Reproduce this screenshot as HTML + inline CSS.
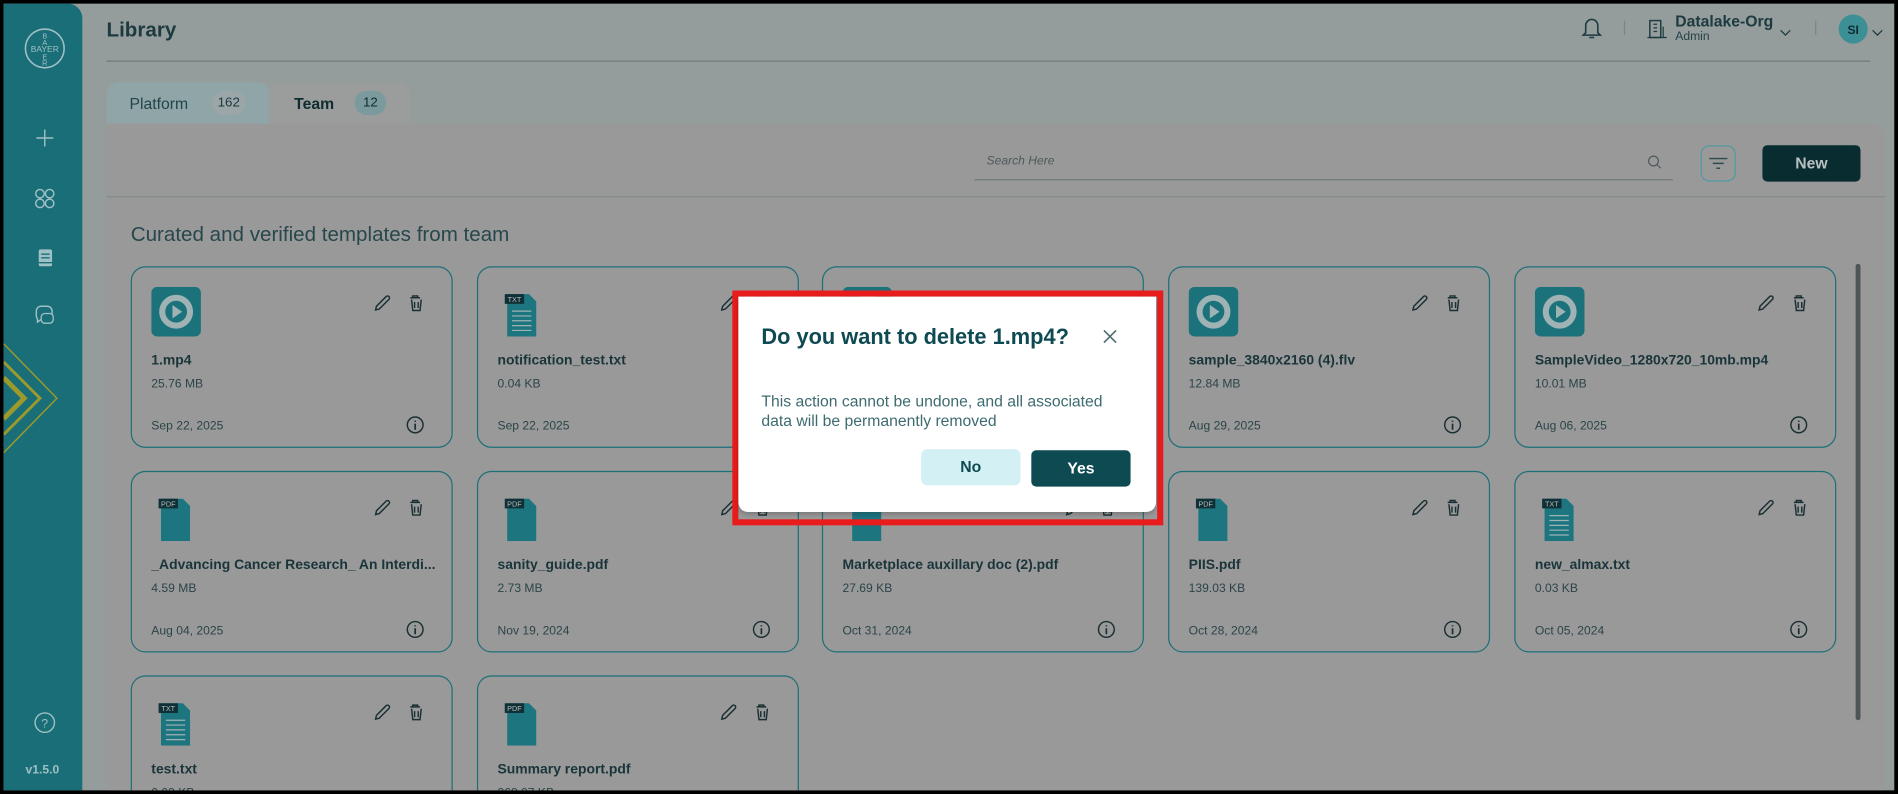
<!DOCTYPE html>
<html><head><meta charset="utf-8"><style>
*{box-sizing:border-box;margin:0;padding:0}
html,body{width:1898px;height:794px;overflow:hidden;background:#000}
#s{position:absolute;left:0;top:0;width:1568px;height:656px;transform:scale(1.21046);transform-origin:0 0;font-family:"Liberation Sans",sans-serif;background:#000;overflow:hidden}
.a{position:absolute}
#main{left:3px;top:3px;width:1562px;height:650px;background:#949c9c;overflow:hidden}
#side{left:3px;top:3px;width:65px;height:650px;background:#1a6e78;border-radius:0 12px 0 0}
.card{position:absolute;width:266px;height:150px;border:1px solid #1d6f78;border-radius:12px;overflow:hidden}
.card .nm{position:absolute;left:16px;top:71px;font-size:11.5px;font-weight:bold;color:#1a353a;white-space:nowrap}
.card .sz{position:absolute;left:16px;top:91px;font-size:10px;color:#2b4448}
.card .dt{position:absolute;left:16px;top:126px;font-size:10px;color:#2b4448}
.card .ic{position:absolute;left:16px;top:16px}
.card .ed{position:absolute;left:192px;top:16px}
.card .inf{position:absolute;left:226px;top:122px}
</style></head><body><div id="s">
<div id="main" class="a"></div>
<div id="side" class="a">
<svg class="a" style="left:0;top:0" width="65" height="650">
<circle cx="34" cy="37" r="16" fill="none" stroke="#9fc0c4" stroke-width="1.3"/>
<text x="34" y="40" font-size="7" fill="#9fc0c4" text-anchor="middle" font-family="Liberation Sans">BAYER</text>
<text x="34" y="29" font-size="6" fill="#9fc0c4" text-anchor="middle">B</text>
<text x="34" y="34" font-size="6" fill="#9fc0c4" text-anchor="middle">A</text>
<text x="34" y="46" font-size="6" fill="#9fc0c4" text-anchor="middle">E</text>
<text x="34" y="51" font-size="6" fill="#9fc0c4" text-anchor="middle">R</text>
<path d="M34 104v14M27 111h14" stroke="#9fc0c4" stroke-width="1.2"/>
<g fill="none" stroke="#9fc0c4" stroke-width="1.2"><circle cx="30" cy="157" r="3.5"/><circle cx="38" cy="157" r="3.5"/><circle cx="30" cy="165" r="3.5"/><circle cx="38" cy="165" r="3.5"/></g>
<rect x="29" y="203" width="11" height="14" rx="1.5" fill="#9fc0c4"/><path d="M31 207h7M31 210h7M29 214h11" stroke="#1a6e78" stroke-width="1.2"/>
<path d="M27 254a4 4 0 0 1 4-4h5a4 4 0 0 1 4 4v3a4 4 0 0 1-4 4h-5l-3 2v-2.5a4 4 0 0 1-1-2.5z" fill="none" stroke="#9fc0c4" stroke-width="1.2"/>
<rect x="31" y="256" width="10" height="8" rx="3" fill="#1a6e78" stroke="#9fc0c4" stroke-width="1.1"/>
<g fill="none" stroke="#9b9a2a"><path d="M0 281L44 326L0 371" stroke-width="1.2"/><path d="M0 296L30 326L0 356" stroke-width="2.4"/><path d="M0 309L17 326L0 343" stroke-width="4"/></g>
<circle cx="34" cy="594" r="8" fill="none" stroke="#9fc0c4" stroke-width="1.2"/><text x="34" y="598" font-size="10" fill="#9fc0c4" text-anchor="middle">?</text>
<text x="32" y="636" font-size="10" font-weight="bold" fill="#9fc0c4" text-anchor="middle">v1.5.0</text>
</svg></div>
<div class="a" style="left:88px;top:15px;font-size:17px;font-weight:bold;color:#1c3a3f">Library</div>
<div class="a" style="left:88px;top:50px;width:1457px;height:1px;background:#6f7a7b"></div>
<svg class="a" style="left:1300px;top:8px" width="268" height="34">
<path d="M15 8a5 5 0 0 1 5 5v6l2 2H8l2-2v-6a5 5 0 0 1 5-5zM13 23h4" fill="none" stroke="#1c3a3f" stroke-width="1.3"/>
<path d="M42 9v12M200 9v12" stroke="#7c8586" stroke-width="1"/>
<rect x="63" y="9" width="9" height="14" fill="none" stroke="#1c3a3f" stroke-width="1.2"/><path d="M66 12h3M66 15h3M66 18h3M74 14v9M61 23h16" stroke="#1c3a3f"/>
<path d="M171 17l4 4 4-4M247 17l4 4 4-4" fill="none" stroke="#1c3a3f" stroke-width="1"/>
<circle cx="231" cy="16" r="12" fill="#3d8f96"/><text x="231" y="20" font-size="10" font-weight="bold" fill="#0f2b2f" text-anchor="middle">SI</text>
</svg>
<div class="a" style="left:1384px;top:10px;font-size:13px;font-weight:bold;color:#1c3a3f">Datalake-Org</div>
<div class="a" style="left:1384px;top:25px;font-size:10px;color:#24434a">Admin</div>
<div class="a" style="left:88px;top:68px;width:135px;height:36px;background:#8fa5a8;border-radius:10px 10px 0 0"></div>
<div class="a" style="left:222px;top:68px;width:117px;height:36px;background:#9b9c9c;border-radius:10px 10px 0 0"></div>
<div class="a" style="left:107px;top:78px;font-size:13px;color:#24434a">Platform</div>
<div class="a" style="left:175px;top:75px;width:28px;height:20px;border-radius:10px;background:#9aa6a7;font-size:11px;line-height:20px;text-align:center;color:#1c3a3f">162</div>
<div class="a" style="left:243px;top:78px;font-size:13px;font-weight:bold;color:#102c30">Team</div>
<div class="a" style="left:293px;top:75px;width:26px;height:20px;border-radius:10px;background:#7a9a9d;font-size:11px;line-height:20px;text-align:center;color:#102c30">12</div>
<div class="a" style="left:88px;top:102px;width:1469px;height:551px;background:#999;border-radius:0 12px 0 0"></div>
<div class="a" style="left:815px;top:128px;font-size:10px;font-style:italic;color:#4d5a5c">Search Here</div>
<div class="a" style="left:805px;top:148px;width:577px;height:1px;background:#717b7c"></div>
<svg class="a" style="left:1360px;top:127px" width="14" height="14"><circle cx="6" cy="6" r="4" fill="none" stroke="#4d5a5c"/><path d="M9 9l3 3" stroke="#4d5a5c"/></svg>
<div class="a" style="left:1405px;top:120px;width:29px;height:30px;border:1px solid #4f9aa2;border-radius:7px"></div>
<svg class="a" style="left:1405px;top:120px" width="29" height="30"><path d="M7 11h15M10 15h9M13 19h3" stroke="#2d4a4e" stroke-width="1.2"/></svg>
<div class="a" style="left:1456px;top:120px;width:81px;height:30px;background:#092c31;border-radius:4px;color:#b9c0c0;font-size:13px;font-weight:bold;text-align:center;line-height:30px">New</div>
<div class="a" style="left:88px;top:162px;width:1469px;height:1px;background:#828b8c"></div>
<div class="a" style="left:108px;top:184px;font-size:17px;color:#27474c">Curated and verified templates from team</div>
<div class="a" style="left:1533px;top:218px;width:4px;height:377px;background:#4e5556;border-radius:2px"></div>

<svg width="0" height="0" style="position:absolute"><defs>
<g id="vid"><rect width="41" height="41" rx="5" fill="#1b727b"/><circle cx="20.5" cy="20.5" r="14" fill="#9fb3b5"/><circle cx="20.5" cy="20.5" r="9" fill="#1b727b"/><path d="M17.5 15v11l8-5.5z" fill="#9fb3b5"/></g>
<g id="edit"><path d="M10 16l8-8a1.6 1.6 0 0 1 2.3 2.3l-8 8-3 .8z" fill="none" stroke="#1a2f33" stroke-width="1.2"/><path d="M38 9h8M40 9v-1.5h4V9M39 10.5l1 9h6l1-9M41.5 12.5v5M44.5 12.5v5" fill="none" stroke="#1a2f33" stroke-width="1.2"/></g>
<g id="info"><circle cx="8" cy="8" r="6.5" fill="none" stroke="#1a2f33" stroke-width="1.2"/><path d="M8 7v5M8 4.5v1" stroke="#1a2f33" stroke-width="1.4"/></g>
</defs></svg>

<div class="card" style="left:108px;top:220px"><svg class="ic" width="41" height="41"><use href="#vid"/></svg><svg class="ed" width="52" height="24"><use href="#edit"/></svg><div class="nm">1.mp4</div><div class="sz">25.76 MB</div><div class="dt">Sep 22, 2025</div><svg class="inf" width="16" height="16"><use href="#info"/></svg></div>
<div class="card" style="left:394px;top:220px"><svg class="ic" width="41" height="41"><path d="M8 6h18l6 6v29H8z" fill="#1d7580"/><rect x="6" y="6" width="16" height="8" fill="#0e3036"/><text x="14" y="12.5" font-size="6" fill="#bbb" text-anchor="middle">TXT</text><path d="M12 20h16M12 24h16M12 28h16M12 32h16M12 36h16" stroke="#9fb3b5"/></svg><svg class="ed" width="52" height="24"><use href="#edit"/></svg><div class="nm">notification_test.txt</div><div class="sz">0.04 KB</div><div class="dt">Sep 22, 2025</div><svg class="inf" width="16" height="16"><use href="#info"/></svg></div>
<div class="card" style="left:679px;top:220px"><svg class="ic" width="41" height="41"><use href="#vid"/></svg></div>
<div class="card" style="left:965px;top:220px"><svg class="ic" width="41" height="41"><use href="#vid"/></svg><svg class="ed" width="52" height="24"><use href="#edit"/></svg><div class="nm">sample_3840x2160 (4).flv</div><div class="sz">12.84 MB</div><div class="dt">Aug 29, 2025</div><svg class="inf" width="16" height="16"><use href="#info"/></svg></div>
<div class="card" style="left:1251px;top:220px"><svg class="ic" width="41" height="41"><use href="#vid"/></svg><svg class="ed" width="52" height="24"><use href="#edit"/></svg><div class="nm">SampleVideo_1280x720_10mb.mp4</div><div class="sz">10.01 MB</div><div class="dt">Aug 06, 2025</div><svg class="inf" width="16" height="16"><use href="#info"/></svg></div>

<div class="card" style="left:108px;top:389px"><svg class="ic" width="41" height="41"><path d="M8 6h18l6 6v29H8z" fill="#1d7580"/><rect x="6" y="6" width="16" height="8" fill="#0e3036"/><text x="14" y="12.5" font-size="6" fill="#bbb" text-anchor="middle">PDF</text></svg><svg class="ed" width="52" height="24"><use href="#edit"/></svg><div class="nm">_Advancing Cancer Research_ An Interdi...</div><div class="sz">4.59 MB</div><div class="dt">Aug 04, 2025</div><svg class="inf" width="16" height="16"><use href="#info"/></svg></div>
<div class="card" style="left:394px;top:389px"><svg class="ic" width="41" height="41"><path d="M8 6h18l6 6v29H8z" fill="#1d7580"/><rect x="6" y="6" width="16" height="8" fill="#0e3036"/><text x="14" y="12.5" font-size="6" fill="#bbb" text-anchor="middle">PDF</text></svg><svg class="ed" width="52" height="24"><use href="#edit"/></svg><div class="nm">sanity_guide.pdf</div><div class="sz">2.73 MB</div><div class="dt">Nov 19, 2024</div><svg class="inf" width="16" height="16"><use href="#info"/></svg></div>
<div class="card" style="left:679px;top:389px"><svg class="ic" width="41" height="41"><path d="M8 6h18l6 6v29H8z" fill="#1d7580"/></svg><svg class="ed" width="52" height="24"><use href="#edit"/></svg><div class="nm">Marketplace auxillary doc (2).pdf</div><div class="sz">27.69 KB</div><div class="dt">Oct 31, 2024</div><svg class="inf" width="16" height="16"><use href="#info"/></svg></div>
<div class="card" style="left:965px;top:389px"><svg class="ic" width="41" height="41"><path d="M8 6h18l6 6v29H8z" fill="#1d7580"/><rect x="6" y="6" width="16" height="8" fill="#0e3036"/><text x="14" y="12.5" font-size="6" fill="#bbb" text-anchor="middle">PDF</text></svg><svg class="ed" width="52" height="24"><use href="#edit"/></svg><div class="nm">PIIS.pdf</div><div class="sz">139.03 KB</div><div class="dt">Oct 28, 2024</div><svg class="inf" width="16" height="16"><use href="#info"/></svg></div>
<div class="card" style="left:1251px;top:389px"><svg class="ic" width="41" height="41"><path d="M8 6h18l6 6v29H8z" fill="#1d7580"/><rect x="6" y="6" width="16" height="8" fill="#0e3036"/><text x="14" y="12.5" font-size="6" fill="#bbb" text-anchor="middle">TXT</text><path d="M12 20h16M12 24h16M12 28h16M12 32h16M12 36h16" stroke="#9fb3b5"/></svg><svg class="ed" width="52" height="24"><use href="#edit"/></svg><div class="nm">new_almax.txt</div><div class="sz">0.03 KB</div><div class="dt">Oct 05, 2024</div><svg class="inf" width="16" height="16"><use href="#info"/></svg></div>

<div class="card" style="left:108px;top:558px"><svg class="ic" width="41" height="41"><path d="M8 6h18l6 6v29H8z" fill="#1d7580"/><rect x="6" y="6" width="16" height="8" fill="#0e3036"/><text x="14" y="12.5" font-size="6" fill="#bbb" text-anchor="middle">TXT</text><path d="M12 20h16M12 24h16M12 28h16M12 32h16M12 36h16" stroke="#9fb3b5"/></svg><svg class="ed" width="52" height="24"><use href="#edit"/></svg><div class="nm">test.txt</div><div class="sz">0.03 KB</div></div>
<div class="card" style="left:394px;top:558px"><svg class="ic" width="41" height="41"><path d="M8 6h18l6 6v29H8z" fill="#1d7580"/><rect x="6" y="6" width="16" height="8" fill="#0e3036"/><text x="14" y="12.5" font-size="6" fill="#bbb" text-anchor="middle">PDF</text></svg><svg class="ed" width="52" height="24"><use href="#edit"/></svg><div class="nm">Summary report.pdf</div><div class="sz">268.07 KB</div></div>

<div class="a" style="left:0;top:653px;width:1568px;height:3px;background:#000"></div>
<div class="a" style="left:1565px;top:0;width:3px;height:656px;background:#000"></div>

<div class="a" style="left:605px;top:240px;width:356px;height:194px;border:5px solid #e81c1c"></div>
<div class="a" style="left:610px;top:245px;width:345px;height:178px;background:#fff;border-radius:0 0 8px 8px;box-shadow:0 2px 4px rgba(0,0,0,.2)"></div>
<div class="a" style="left:629px;top:268px;font-size:18px;font-weight:bold;color:#0e4a52">Do you want to delete 1.mp4?</div>
<svg class="a" style="left:910px;top:271px" width="14" height="14"><path d="M2 2l10 10M12 2L2 12" stroke="#4d6a70" stroke-width="1.3"/></svg>
<div class="a" style="left:629px;top:324px;width:310px;font-size:13px;line-height:16px;color:#3d6b70">This action cannot be undone, and all associated data will be permanently removed</div>
<div class="a" style="left:761px;top:371px;width:82px;height:30px;background:#d3f0f4;border-radius:5px;text-align:center;line-height:30px;font-size:13px;font-weight:bold;color:#0e4a52">No</div>
<div class="a" style="left:852px;top:372px;width:82px;height:30px;background:#0d4a52;border-radius:4px;text-align:center;line-height:30px;font-size:13px;font-weight:bold;color:#fff">Yes</div>
</div></body></html>
